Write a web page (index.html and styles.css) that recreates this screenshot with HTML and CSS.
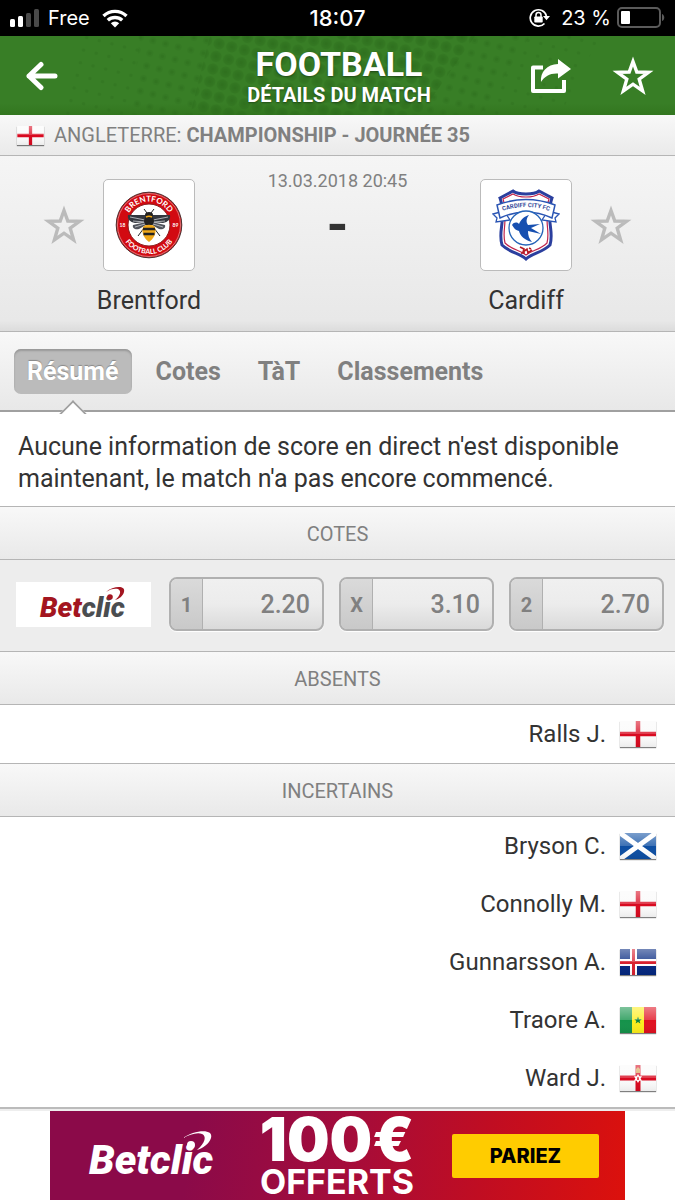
FILE: index.html
```html
<!DOCTYPE html>
<html lang="fr">
<head>
    <meta charset="UTF-8">
    <meta name="viewport" content="width=device-width, initial-scale=1.0">
    <title>Football - Détails du match</title>
    <link rel="stylesheet" href="styles.css">
</head>
<body>

    <!-- shared shapes -->
    <svg class="defs" width="0" height="0" aria-hidden="true">
        <defs>
            <linearGradient id="gloss" x1="0" y1="0" x2="0" y2="1">
                <stop offset="0" stop-color="#fff" stop-opacity="0.45"/>
                <stop offset="0.5" stop-color="#fff" stop-opacity="0.2"/>
                <stop offset="0.5" stop-color="#fff" stop-opacity="0"/>
                <stop offset="1" stop-color="#000" stop-opacity="0.06"/>
            </linearGradient>
            <symbol id="star" viewBox="0 0 42 40">
                <path d="M21 5.5 L24.8 16 L36.5 16.3 L27.200 23.2 L30.6 34.8 L21 28.2 L11.4 34.8 L14.8 23.2 L5.5 16.3 L17.2 16 Z" fill="none" stroke="currentColor" stroke-width="3.4" stroke-miterlimit="8"/>
            </symbol>
            <symbol id="england" viewBox="0 0 36 26">
                <rect width="36" height="26" fill="#fafafa"/>
                <path d="M18 0V26M0 13H36" stroke="#d8091f" stroke-width="4.5"/>
                <rect width="36" height="26" fill="url(#gloss)"/>
            </symbol>
            <symbol id="scotland" viewBox="0 0 36 26">
                <rect width="36" height="26" fill="#0d4ea2"/>
                <path d="M0 0L36 26M36 0L0 26" stroke="#fff" stroke-width="5"/>
                <rect width="36" height="26" fill="url(#gloss)"/>
            </symbol>
            <symbol id="iceland" viewBox="0 0 36 26">
                <rect width="36" height="26" fill="#04277f"/>
                <path d="M13.5 0V26M0 13.5H36" stroke="#fff" stroke-width="7"/>
                <path d="M13.5 0V26M0 13.5H36" stroke="#d8212f" stroke-width="3"/>
                <rect width="36" height="26" fill="url(#gloss)"/>
            </symbol>
            <symbol id="senegal" viewBox="0 0 36 26">
                <rect width="12" height="26" fill="#14924a"/>
                <rect x="12" width="12" height="26" fill="#fdee1c"/>
                <rect x="24" width="12" height="26" fill="#e01020"/>
                <path d="M18 9.5L19 12.2H21.8L19.6 13.9L20.4 16.6L18 15L15.6 16.6L16.4 13.9L14.2 12.2H17Z" fill="#0f8443"/>
                <rect width="36" height="26" fill="url(#gloss)"/>
            </symbol>
            <symbol id="ulster" viewBox="0 0 36 26">
                <rect width="36" height="26" fill="#fafafa"/>
                <path d="M18 0V26M0 13H36" stroke="#d8091f" stroke-width="5"/>
                <path d="M18 9L19.300 11.200H22L20.600 13.500L22 15.800H19.300L18 18L16.700 15.800H14L15.400 13.500L14 11.200H16.700Z" fill="#fff"/>
                <path d="M17.300 15V12.500L18 11.500L18.700 12.500V15Z" fill="#d8091f"/>
                <path d="M16 4L18 2L20 4V8H16Z" fill="#d9a55c"/>
                <rect width="36" height="26" fill="url(#gloss)"/>
            </symbol>
        </defs>
    </svg>

    <div class="status">
        <div class="status-left">
            <svg width="30" height="18" viewBox="0 0 30 18">
                <rect x="0" y="10" width="5" height="8" rx="1.5" fill="#fff"/>
                <rect x="8" y="7" width="5" height="11" rx="1.5" fill="#fff"/>
                <rect x="16" y="4" width="5" height="14" rx="1.5" fill="#4a4a4a"/>
                <rect x="24" y="0" width="5" height="18" rx="1.5" fill="#4a4a4a"/>
            </svg>
            <span>Free</span>
            <svg class="wifi" width="26" height="19" viewBox="0 0 26 19">
                <path d="M1.5 7A16.5 16.5 0 0 1 24.5 7M5.8 11.3A10.5 10.5 0 0 1 20.2 11.3" fill="none" stroke="#fff" stroke-width="3.4"/>
                <path d="M13 18.5L8.8 14.3A6 6 0 0 1 17.2 14.3Z" fill="#fff"/>
            </svg>
        </div>
        <div class="status-time">18:07</div>
        <div class="status-right">
            <svg width="22" height="20" viewBox="0 0 22 20">
                <path d="M15.500 15.500A8.200 8.200 0 1 1 17.400 8" fill="none" stroke="#fff" stroke-width="1.7"/>
                <path d="M14 8H21L17.5 12.3Z" fill="#fff"/>
                <rect x="5.3" y="8.5" width="8.4" height="6" rx="0.8" fill="#fff"/>
                <path d="M7 9V7A2.5 2.5 0 0 1 12 7V9" fill="none" stroke="#fff" stroke-width="1.5"/>
            </svg>
            <span>23 %</span>
            <svg width="48" height="22" viewBox="0 0 48 22">
                <rect x="1" y="1" width="42" height="19" rx="4" fill="none" stroke="#5b5b5b" stroke-width="2"/>
                <rect x="4" y="4" width="9" height="13" rx="1" fill="#fff"/>
                <path d="M45 7C48 8 48 13 45 14Z" fill="#5b5b5b"/>
            </svg>
        </div>
    </div>

    <header class="header">
        <svg class="halftone" width="675" height="79" viewBox="0 0 675 79" preserveAspectRatio="xMidYMid slice" aria-hidden="true">
            <defs>
                <pattern id="dotsBig" width="13" height="13" patternUnits="userSpaceOnUse" patternTransform="rotate(14)"><circle cx="6.5" cy="6.5" r="5.5" fill="#2c6c1c"/></pattern>
                <pattern id="dotsMid" width="13" height="13" patternUnits="userSpaceOnUse" patternTransform="rotate(14)"><circle cx="6.5" cy="6.5" r="3.5" fill="#2c6c1c"/></pattern>
                <pattern id="dotsSmall" width="13" height="13" patternUnits="userSpaceOnUse" patternTransform="rotate(14)"><circle cx="6.5" cy="6.5" r="1.8" fill="#2c6c1c"/></pattern>
            </defs>
            <path d="M75 0H600L560 79H60Z" fill="url(#dotsSmall)" opacity="0.35"/>
            <path d="M140 0H530L480 79H130Z" fill="url(#dotsMid)" opacity="0.25"/>
            <path d="M210 0H475L420 79H190Z" fill="url(#dotsBig)" opacity="0.4"/>
        </svg>
        <button class="icon-btn" type="button" aria-label="Retour">
            <svg width="34" height="30" viewBox="0 0 34 30">
                <path d="M31 15H5M17 3.500L5 15L17 26.500" fill="none" stroke="#fff" stroke-width="5" stroke-linecap="round" stroke-linejoin="round"/>
            </svg>
        </button>
        <div class="header-title">
            <h1>FOOTBALL</h1>
            <p>DÉTAILS DU MATCH</p>
        </div>
        <div class="header-actions">
            <button class="icon-btn" type="button" aria-label="Partager">
                <svg width="42" height="36" viewBox="0 0 42 36">
                    <path d="M13 9.500H3V33H34V22" fill="none" stroke="#fff" stroke-width="4" stroke-linejoin="round"/>
                    <path d="M28 1L41 11L28 20.500V15.500C20 15 15 18 11 24C10 14 17 6.500 28 6Z" fill="#fff"/>
                </svg>
            </button>
            <button class="icon-btn" type="button" aria-label="Ajouter aux favoris">
                <svg class="star"><use href="#star"/></svg>
            </button>
        </div>
    </header>

    <div class="league">
        <svg class="flag flag-small"><use href="#england"/></svg>
        <p>ANGLETERRE: <strong>CHAMPIONSHIP - JOURNÉE 35</strong></p>
    </div>

    <section class="match">
        <button class="fav-btn" type="button" aria-label="Suivre Brentford">
            <svg class="star"><use href="#star"/></svg>
        </button>
        <div class="team">
            <div class="crest">
                <svg width="68" height="68" viewBox="0 0 68 68" role="img" aria-label="Brentford">
                    <defs>
                        <path id="arcTop" d="M10.5 34A23.5 23.5 0 0 1 57.5 34"/>
                        <path id="arcBottom" d="M5 34A29 29 0 0 0 63 34"/>
                    </defs>
                    <circle cx="34" cy="34" r="32.8" fill="#d20a11" stroke="#4a3030" stroke-width="1"/>
                    <circle cx="34" cy="34" r="31.5" fill="none" stroke="#e9b9b9" stroke-width="0.6"/>
                    <circle cx="34" cy="34" r="21" fill="#fff" stroke="#8a1a1a" stroke-width="1"/>
                    <text class="crest-text" font-size="8"><textPath href="#arcTop" startOffset="50%" text-anchor="middle">BRENTFORD</textPath></text>
                    <text class="crest-text" font-size="7"><textPath href="#arcBottom" startOffset="50%" text-anchor="middle">FOOTBALL CLUB</textPath></text>
                    <text class="crest-text" font-size="5" x="4.5" y="36">18</text>
                    <text class="crest-text" font-size="5" x="57.5" y="36">89</text>
                    <path d="M31 24L13 24C12 28 15 31 20 32L31 31ZM37 24L55 24C56 28 53 31 48 32L37 31Z" fill="#34383f"/>
                    <path d="M31 31L18 34C17 37 20 39 24 38L31 34ZM37 31L50 34C51 37 48 39 44 38L37 34Z" fill="#50545c"/>
                    <path d="M15 26L30 29M18 30L30 31M20 36L30 33M53 26L38 29M50 30L38 31M48 36L38 33" stroke="#c9cdd2" stroke-width="0.8"/>
                    <path d="M32 22L29 18M36 22L39 18M29 37L23 45M39 37L45 45" stroke="#222" stroke-width="1"/>
                    <ellipse cx="34" cy="24" rx="4" ry="3" fill="#222"/>
                    <circle cx="34" cy="30" r="5" fill="#222"/>
                    <path d="M28 36C30 33 38 33 40 36C42 43 38 48 34 51C30 48 26 43 28 36Z" fill="#f0a818"/>
                    <path d="M28 38H40M28.5 43H39.5" stroke="#222" stroke-width="2.5"/>
                    <path d="M31 26C33 25 35 25 37 26" stroke="#f0a818" stroke-width="1.5" fill="none"/>
                </svg>
            </div>
            <span class="team-name">Brentford</span>
        </div>
        <div class="score">
            <time datetime="2018-03-13T20:45">13.03.2018 20:45</time>
            <span class="result">-</span>
        </div>
        <div class="team">
            <div class="crest">
                <svg width="68" height="72" viewBox="0 0 68 72" role="img" aria-label="Cardiff">
                    <defs><path id="arcRibbon" d="M5 24Q34 12 63 24"/></defs>
                    <path d="M8 9L21 2C26 6 42 6 47 2L60 9C58 14 58 17 59 22C55 33 62 43 58 56C50 64 40 64 34 70C28 64 18 64 10 56C6 43 13 33 9 22C10 17 10 14 8 9Z" fill="#fff" stroke="#2b3f9e" stroke-width="3"/>
                    <path d="M11 10L21 5C27 9 41 9 47 5L57 10C55 15 55 18 56 23C53 34 58 43 55 54C48 61 40 61 34 66C28 61 20 61 13 54C10 43 15 34 12 23C13 18 13 15 11 10Z" fill="#fff" stroke="#c0244c" stroke-width="1.2"/>
                    <path d="M12 22L1 25L5 29L4 33L18 31ZM56 22L67 25L63 29L64 33L50 31Z" fill="#fff" stroke="#2a55b4" stroke-width="1.3"/>
                    <path d="M5 16Q34 5 63 16L60 29Q34 17 8 29Z" fill="#fff" stroke="#2a55b4" stroke-width="1.5"/>
                    <circle cx="34" cy="39" r="17" fill="#fff" stroke="#2463b8" stroke-width="1.3"/>
                    <text font-family="Roboto, sans-serif" font-weight="bold" font-size="6" fill="#354c9b"><textPath href="#arcRibbon" startOffset="50%" text-anchor="middle">CARDIFF CITY FC</textPath></text>
                    <path d="M20 36C22 33 25 33 27 35C29 30 33 27 37 26C34 30 34 33 36 36L48 35L39 39L49 45L36 42C36 46 37 50 40 53C33 51 28 47 27 42C23 41 22 39 20 36Z" fill="#174fb0"/>
                    <path d="M28 58L32 60L31 63L35 60L36 64L40 61M29 64H33M37 59L39 60" stroke="#b51b25" stroke-width="1.6" fill="none"/>
                </svg>
            </div>
            <span class="team-name">Cardiff</span>
        </div>
        <button class="fav-btn" type="button" aria-label="Suivre Cardiff">
            <svg class="star"><use href="#star"/></svg>
        </button>
    </section>

    <nav class="tabs">
        <button class="tab active" type="button">Résumé</button>
        <button class="tab" type="button">Cotes</button>
        <button class="tab" type="button">TàT</button>
        <button class="tab" type="button">Classements</button>
    </nav>

    <p class="info">Aucune information de score en direct n'est disponible maintenant, le match n'a pas encore commencé.</p>

    <h2 class="section-title">COTES</h2>
    <div class="odds">
        <a class="bookmaker" href="#" aria-label="Betclic">
            <svg width="96" height="40" viewBox="0 0 96 40">
                <text class="brand" x="4" y="33" font-size="28"><tspan fill="#a31520">Bet</tspan><tspan fill="#4a4d50">clic</tspan></text>
                <path d="M70 8C77 2 90 1 88 8C87 12 83 15 79 16C84 12 86 7 82 5C79 4 74 5 70 8Z" fill="#a31520"/>
                <circle cx="74" cy="13" r="2.8" fill="#a31520"/>
            </svg>
        </a>
        <button class="odd" type="button"><span class="odd-label">1</span><span class="odd-value">2.20</span></button>
        <button class="odd" type="button"><span class="odd-label">X</span><span class="odd-value">3.10</span></button>
        <button class="odd" type="button"><span class="odd-label">2</span><span class="odd-value">2.70</span></button>
    </div>

    <h2 class="section-title">ABSENTS</h2>
    <ul class="players">
        <li>Ralls J. <svg class="flag"><use href="#england"/></svg></li>
    </ul>

    <h2 class="section-title">INCERTAINS</h2>
    <ul class="players">
        <li>Bryson C. <svg class="flag"><use href="#scotland"/></svg></li>
        <li>Connolly M. <svg class="flag"><use href="#england"/></svg></li>
        <li>Gunnarsson A. <svg class="flag"><use href="#iceland"/></svg></li>
        <li>Traore A. <svg class="flag"><use href="#senegal"/></svg></li>
        <li>Ward J. <svg class="flag"><use href="#ulster"/></svg></li>
    </ul>

    <div class="separator"></div>

    <aside class="ad">
        <svg width="136" height="56" viewBox="0 0 136 56" role="img" aria-label="Betclic">
            <text class="brand" x="3" y="46" font-size="41" fill="#fff">Betclic</text>
            <path d="M97 10C108 2 128 0 125 10C123 16 117 20 111 22C117 17 122 9 116 6C111 4 103 7 97 10Z" fill="#fff"/>
            <circle cx="105" cy="17" r="4" fill="#fff"/>
        </svg>
        <div class="ad-offer">
            <span class="ad-amount">100€</span>
            <span class="ad-label">OFFERTS</span>
        </div>
        <a class="ad-btn" href="#">PARIEZ</a>
    </aside>

</body>
</html>
```
FILE: styles.css
```css
* {
    box-sizing: border-box;
}

body {
    font-family: Roboto, "Liberation Sans", sans-serif;
    background-color: #fff;
    color: #333;
    margin: 0;
}

h1, h2, p, ul {
    margin: 0;
    padding: 0;
}

button {
    font-family: inherit;
    border: 0;
    padding: 0;
    background: none;
    cursor: pointer;
}

svg {
    display: block;
    flex: none;
}

.defs {
    position: absolute;
}

.star {
    width: 42px;
    height: 40px;
}

.flag {
    width: 36px;
    height: 26px;
    box-shadow: 0 1px 1px rgba(0, 0, 0, 0.5);
}

.flag-small {
    width: 27px;
    height: 19px;
}

/* status bar */
.status {
    display: grid;
    grid-template-columns: 1fr auto 1fr;
    align-items: center;
    height: 36px;
    padding: 0 10px;
    background-color: #000;
    color: #fff;
    font-family: Inter, Roboto, sans-serif;
    font-size: 20px;
}

.status-left,
.status-right {
    display: flex;
    align-items: center;
    gap: 8px;
}

.status-right {
    justify-content: flex-end;
    gap: 6px;
}

.status-right span {
    margin-left: 4px;
}

.wifi {
    margin-left: 4px;
}

.status-time {
    font-size: 22px;
    font-weight: 500;
}

/* header */
.header {
    position: relative;
    display: grid;
    grid-template-columns: 1fr auto 1fr;
    align-items: center;
    height: 79px;
    padding: 0 21px 0 24px;
    background: linear-gradient(#387e26, #387e26 85%, #32761f);
    color: #fff;
    text-align: center;
}

.halftone {
    position: absolute;
    inset: 0;
    width: 100%;
    height: 100%;
}

.icon-btn {
    position: relative;
    justify-self: start;
    color: #fff;
}

.header-title {
    position: relative;
    padding-top: 2px;
    text-shadow: 0 1px 2px rgba(0, 0, 0, 0.4);
}

.header-title h1 {
    font-size: 34px;
    line-height: 36px;
}

.header-title p {
    font-size: 20px;
    font-weight: bold;
    line-height: 26px;
}

.header-actions {
    display: flex;
    align-items: center;
    justify-content: flex-end;
    gap: 40px;
}

/* league */
.league {
    display: flex;
    align-items: center;
    gap: 10px;
    height: 41px;
    padding: 0 17px;
    background: linear-gradient(#f8f8f8, #eaeaea);
    border-bottom: 1px solid #b5b5b5;
    color: #808080;
    font-size: 20px;
}

/* match */
.match {
    display: grid;
    grid-template-columns: 42px 92px 1fr 92px 42px;
    column-gap: 18px;
    height: 176px;
    padding: 14px 43px 0;
    background: linear-gradient(#f5f5f5, #e8e8e8 94%, #dcdcdc);
    border-bottom: 1px solid #b5b5b5;
}

.fav-btn {
    height: 92px;
    margin-top: 9px;
    color: #bbb;
}

.team {
    display: flex;
    flex-direction: column;
    align-items: center;
    gap: 14px;
    margin-top: 9px;
}

.crest {
    display: flex;
    align-items: center;
    justify-content: center;
    width: 92px;
    height: 92px;
    background-color: #fff;
    border: 1px solid #bbb;
    border-radius: 5px;
}

.crest-text {
    font-family: Lato, sans-serif;
    font-weight: bold;
    fill: #fff;
}

.team-name {
    font-size: 25px;
    line-height: 32px;
}

.score {
    display: flex;
    flex-direction: column;
    align-items: center;
    white-space: nowrap;
}

.score time {
    color: #808080;
    font-size: 18px;
    line-height: 22px;
}

.result {
    font-size: 56px;
    font-weight: bold;
    line-height: 66px;
}

/* tabs */
.tabs {
    position: relative;
    display: flex;
    align-items: center;
    gap: 11px;
    height: 80px;
    padding: 0 14px;
    background: linear-gradient(#f8f8f8, #e8e8e8);
    border-bottom: 2px solid #a0a0a0;
}

.tab {
    height: 45px;
    padding: 0 13px;
    border-radius: 7px;
    color: #808080;
    font-size: 25px;
    font-weight: bold;
}

.tab.active {
    position: relative;
    background-color: #bbb;
    box-shadow: inset 0 2px 2px #999;
    color: #fff;
    text-shadow: 0 -1px 1px #888;
}

/* arrow under the selected tab */
.tab.active::after {
    content: "";
    position: absolute;
    left: 50%;
    top: 55px;
    width: 18px;
    height: 18px;
    margin-left: -10px;
    background-color: #fff;
    border-top: 2px solid #a0a0a0;
    border-left: 2px solid #a0a0a0;
    clip-path: polygon(0 0, 100% 0, 0 100%);
    transform: rotate(45deg);
}

.info {
    padding: 19px 18px 11px;
    font-size: 25px;
    line-height: 32px;
}

/* sections */
.section-title {
    height: 54px;
    background: linear-gradient(#f8f8f8, #e9e9e9);
    border-top: 1px solid #b5b5b5;
    border-bottom: 1px solid #b5b5b5;
    color: #808080;
    font-size: 20px;
    font-weight: normal;
    line-height: 54px;
    text-align: center;
}

.odds {
    display: flex;
    gap: 15px;
    padding: 17px 11px 20px 16px;
    background-color: #ededed;
}

.bookmaker {
    display: flex;
    align-items: center;
    justify-content: center;
    align-self: center;
    width: 135px;
    height: 45px;
    margin-right: 3px;
    background-color: #fff;
}

.brand {
    font-family: Roboto, sans-serif;
    font-style: italic;
    font-weight: 900;
}

.odd {
    display: flex;
    flex: 1;
    align-items: stretch;
    height: 54px;
    overflow: hidden;
    border: 2px solid #b0b0b0;
    border-radius: 8px;
    background: linear-gradient(#f0f0f0, #ececec 50%, #dadada);
    box-shadow: 0 1px 1px #fff;
    color: #808080;
    font-weight: 500;
    line-height: 52px;
}

.odd-label {
    width: 32px;
    background: linear-gradient(#dadada, #c9c9c9);
    border-right: 1px solid #b0b0b0;
    font-size: 20px;
    font-weight: bold;
}

.odd-value {
    flex: 1;
    padding-right: 12px;
    font-size: 25px;
    text-align: right;
}

/* players */
.players {
    list-style-type: none;
    padding: 0 19px;
}

.players li {
    display: flex;
    align-items: center;
    justify-content: flex-end;
    gap: 14px;
    height: 58px;
    font-size: 24px;
}

.separator {
    height: 4px;
    background-color: #eee;
    border-top: 2px solid #bbb;
}

/* ad */
.ad {
    display: grid;
    grid-template-columns: 136px 1fr 147px;
    align-items: center;
    max-width: 575px;
    height: 90px;
    margin: 0 auto;
    padding: 0 26px 0 36px;
    background: linear-gradient(100deg, #8b0a49, #8b0a49 25%, #a30c3c 50%, #c00d22 75%, #dc110c);
    color: #fff;
    font-family: Inter, sans-serif;
}

.ad-offer {
    display: flex;
    flex-direction: column;
    align-items: center;
}

.ad-amount {
    font-size: 60px;
    font-weight: 900;
    line-height: 52px;
}

.ad-label {
    font-size: 34px;
    font-weight: bold;
    line-height: 34px;
}

.ad-btn {
    height: 44px;
    border-radius: 2px;
    background-color: #fc0;
    color: #000;
    font-size: 20px;
    font-weight: 800;
    line-height: 44px;
    text-align: center;
    text-decoration: none;
}
```
